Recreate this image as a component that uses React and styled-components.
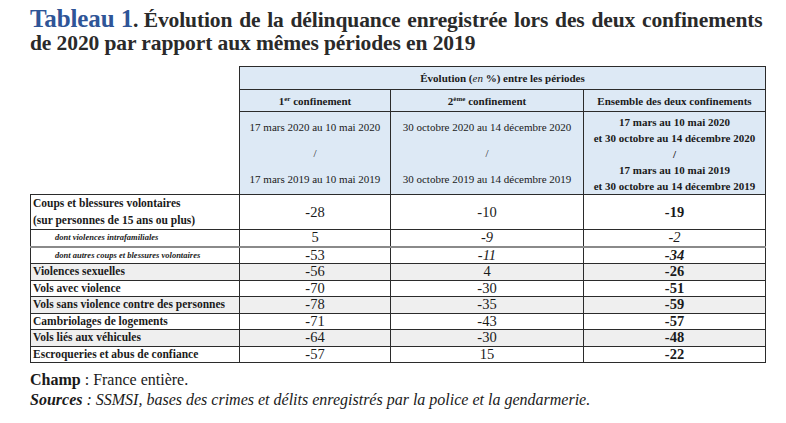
import React from 'react';
import styled, { createGlobalStyle } from 'styled-components';

const serif = '"Liberation Serif", "DejaVu Serif", serif';

const GlobalStyle = createGlobalStyle`
  body {
    margin: 0;
    background: #ffffff;
    font-family: ${serif};
    color: #1a1a1a;
  }
  table, th, td {
    font-family: ${serif};
  }
`;

const Page = styled.div`
  width: 786px;
  height: 423px;
  padding: 7px 0 0 30px;
  box-sizing: border-box;
  overflow: hidden;
  font-family: ${serif};
`;

const Title = styled.h1`
  margin: 0;
  font-family: ${serif};
  font-size: 21.5px;
  line-height: 23px;
  font-weight: bold;
  color: #2a2a2a;
  letter-spacing: -0.1px;

  span {
    color: #2f5597;
    font-size: 25px;
  }
`;

const FirstLine = styled.span`
  && {
    color: inherit;
    font-size: inherit;
    word-spacing: 1.5px;
  }
`;

const Table = styled.table`
  margin-top: 11px;
  border-collapse: collapse;
  table-layout: fixed;
  width: 735px;
  font-family: ${serif};
`;

const Blank = styled.th`
  border: none;
  background: #ffffff;
  padding: 0;
`;

const HeadCell = styled.th`
  background: #dde9f5;
  border: 1px solid #2b2b2b;
  font-family: ${serif};
  font-size: 11px;
  font-weight: ${props => (props.bold ? 'bold' : 'normal')};
  text-align: center;
  vertical-align: ${props => (props.top ? 'top' : 'middle')};
  padding: ${props => (props.top ? '2px 2px 0' : '0 2px')};
  height: ${props => props.h}px;
  line-height: ${props => props.lh || 14}px;
  color: #1a1a1a;
  white-space: nowrap;
  box-sizing: border-box;

  sup {
    font-size: 7px;
    vertical-align: 4px;
    line-height: 0;
  }
`;

const Slash = styled.div`
  margin: ${props => props.gap}px 0;
`;

const Row = styled.tr`
  background: ${props => (props.shade ? '#efefef' : '#ffffff')};
  border-bottom: ${props => (props.soft ? '2px solid #8a8a8a' : '1px solid #2b2b2b')};
`;

const Label = styled.td`
  border-left: 1px solid #2b2b2b;
  border-right: 1px solid #2b2b2b;
  font-family: ${serif};
  font-size: ${props => (props.sub ? 8.5 : 11.5)}px;
  font-weight: bold;
  font-style: ${props => (props.sub ? 'italic' : 'normal')};
  line-height: ${props => (props.h ? 17 : 15)}px;
  padding: ${props => (props.sub ? '0 0 0 24px' : '0 2px')};
  height: ${props => props.h || 15.5}px;
  white-space: nowrap;
`;

const Value = styled.td`
  border-left: 1px solid #2b2b2b;
  border-right: 1px solid #2b2b2b;
  font-family: ${serif};
  text-align: center;
  font-size: 14.5px;
  line-height: 15px;
  padding: 0;
  font-weight: ${props => (props.bold ? 'bold' : 'normal')};
  font-style: ${props => (props.italic ? 'italic' : 'normal')};
`;

const Notes = styled.div`
  margin-top: 7px;
  font-family: ${serif};
  font-size: 16px;
  line-height: 20px;
  color: #1a1a1a;

  b {
    font-weight: bold;
  }
`;

const rows = [
  { label: ['Coups et blessures volontaires', '(sur personnes de 15 ans ou plus)'], v: ['-28', '-10', '-19'], h: 34 },
  { label: ['dont violences intrafamiliales'], v: ['5', '-9', '-2'], sub: true, soft: true },
  { label: ['dont autres coups et blessures volontaires'], v: ['-53', '-11', '-34'], sub: true },
  { label: ['Violences sexuelles'], v: ['-56', '4', '-26'], shade: true },
  { label: ['Vols avec violence'], v: ['-70', '-30', '-51'] },
  { label: ['Vols sans violence contre des personnes'], v: ['-78', '-35', '-59'], shade: true },
  { label: ['Cambriolages de logements'], v: ['-71', '-43', '-57'] },
  { label: ['Vols liés aux véhicules'], v: ['-64', '-30', '-48'], shade: true },
  { label: ['Escroqueries et abus de confiance'], v: ['-57', '15', '-22'] },
];

const App = () => (
  <>
    <GlobalStyle />
    <Page>
      <Title>
        <span>Tableau 1</span>.{' '}
        <FirstLine>Évolution de la délinquance enregistrée lors des deux confinements</FirstLine>
        <br />
        de 2020 par rapport aux mêmes périodes en 2019
      </Title>
      <Table>
        <colgroup>
          <col style={{ width: 209 }} />
          <col style={{ width: 151 }} />
          <col style={{ width: 193 }} />
          <col style={{ width: 182 }} />
        </colgroup>
        <thead>
          <tr>
            <Blank rowSpan={3} />
            <HeadCell colSpan={3} h={23} bold>
              Évolution (<i style={{ fontWeight: 'normal' }}>en</i> %) entre les périodes
            </HeadCell>
          </tr>
          <tr>
            <HeadCell h={22} bold>1<sup>er</sup> confinement</HeadCell>
            <HeadCell h={22} bold>2<sup>ème</sup> confinement</HeadCell>
            <HeadCell h={22} bold>Ensemble des deux confinements</HeadCell>
          </tr>
          <tr>
            <HeadCell h={82} lh={14}>
              17 mars 2020 au 10 mai 2020
              <Slash gap={12}>/</Slash>
              17 mars 2019 au 10 mai 2019
            </HeadCell>
            <HeadCell h={82} lh={14}>
              30 octobre 2020 au 14 décembre 2020
              <Slash gap={12}>/</Slash>
              30 octobre 2019 au 14 décembre 2019
            </HeadCell>
            <HeadCell h={82} lh={16} bold top>
              17 mars au 10 mai 2020
              <br />
              et 30 octobre au 14 décembre 2020
              <Slash gap={0}>/</Slash>
              17 mars au 10 mai 2019
              <br />
              et 30 octobre au 14 décembre 2019
            </HeadCell>
          </tr>
        </thead>
        <tbody style={{ borderTop: '1px solid #2b2b2b', borderLeft: '1px solid #2b2b2b' }}>
          {rows.map((r, i) => (
            <Row key={i} shade={r.shade} soft={r.soft}>
              <Label sub={r.sub} h={r.h}>
                {r.label.map((l, j) => (
                  <div key={j}>{l}</div>
                ))}
              </Label>
              <Value>{r.v[0]}</Value>
              <Value italic={r.sub}>{r.v[1]}</Value>
              <Value bold={!r.sub || r.v[2] === '-34'} italic={r.sub}>{r.v[2]}</Value>
            </Row>
          ))}
        </tbody>
      </Table>
      <Notes>
        <b>Champ</b> : France entière.
        <br />
        <i><b>Sources</b> : SSMSI, bases des crimes et délits enregistrés par la police et la gendarmerie.</i>
      </Notes>
    </Page>
  </>
);

export default App;
